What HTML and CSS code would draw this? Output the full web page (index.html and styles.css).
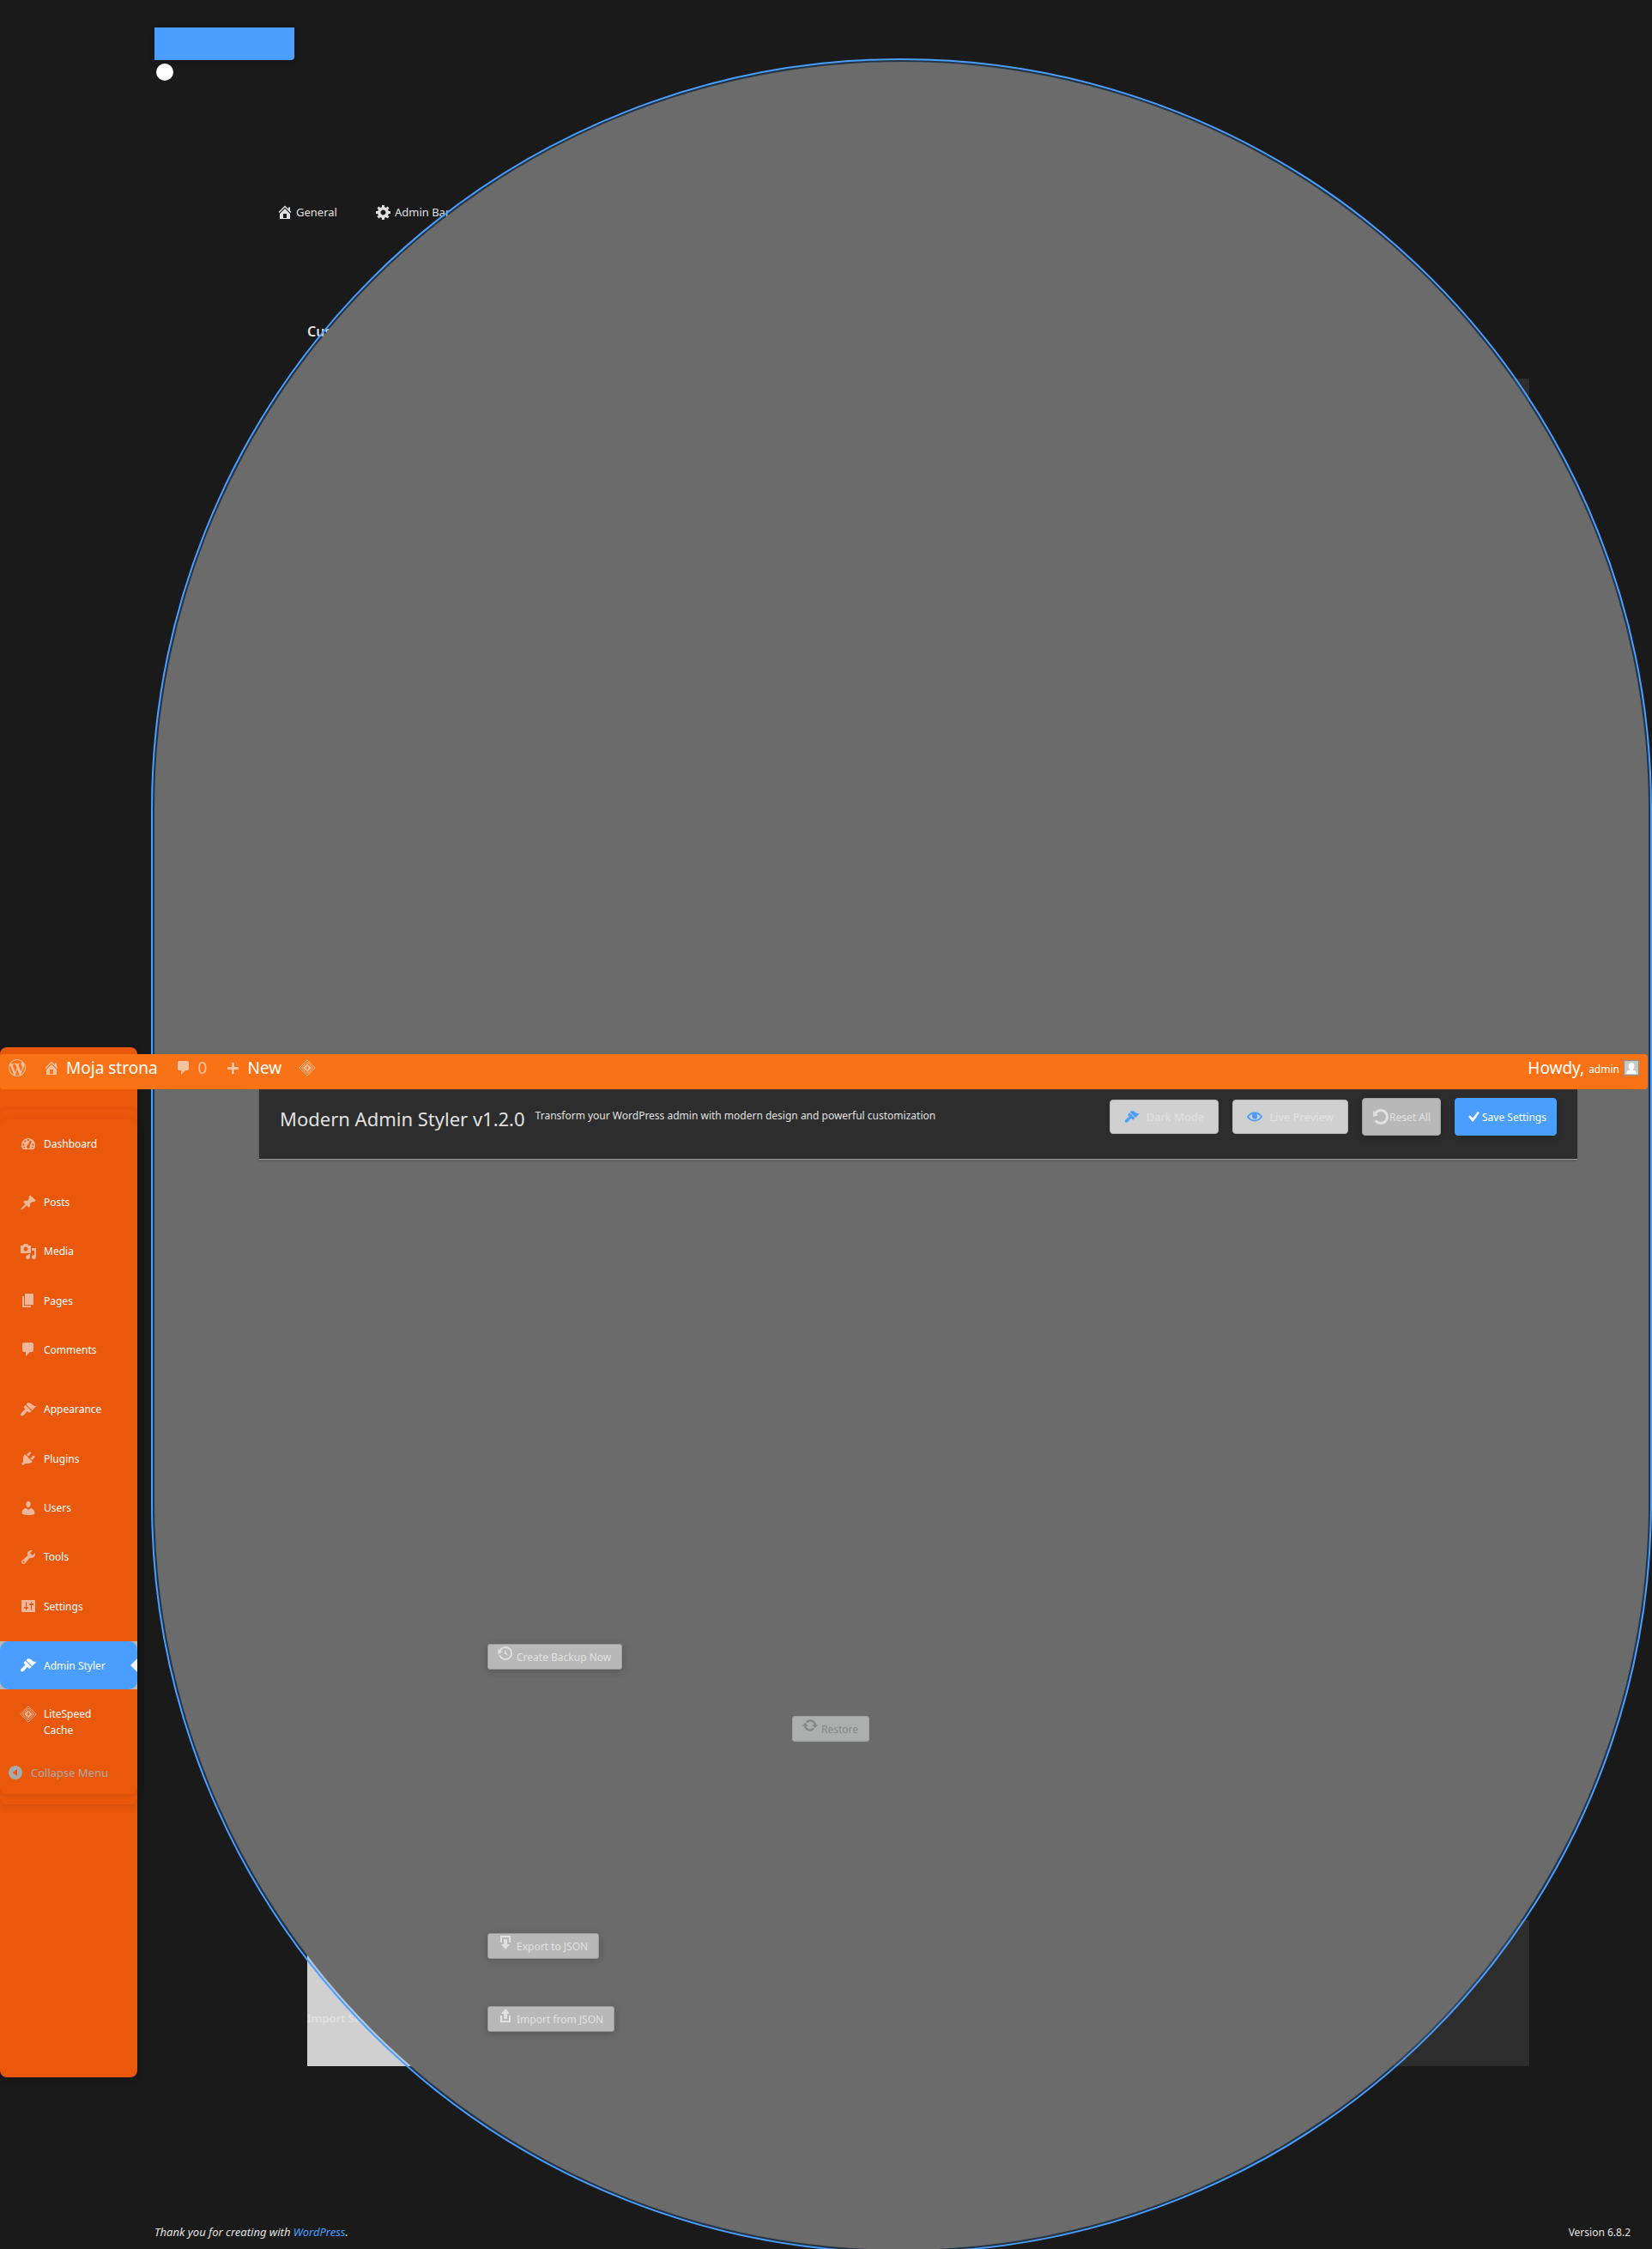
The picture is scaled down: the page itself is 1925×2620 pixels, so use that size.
FILE: index.html
```html
<!DOCTYPE html>
<html lang="en">
<head>
<meta charset="utf-8">
<title>Modern Admin Styler</title>
<link rel="stylesheet" href="styles.css">
</head>
<body>
<svg class="sprite" aria-hidden="true">
  <symbol id="i-wp" viewBox="0 0 20 20"><path d="M20 10c0-5.51-4.49-10-10-10C4.48 0 0 4.49 0 10c0 5.52 4.48 10 10 10 5.51 0 10-4.48 10-10zM7.78 15.37L4.37 6.22c.55-.02 1.17-.08 1.17-.08.5-.06.44-1.13-.06-1.11 0 0-1.45.11-2.37.11-.18 0-.37 0-.58-.01C4.12 2.69 6.87 1.11 10 1.11c2.33 0 4.45.87 6.05 2.34-.68-.11-1.65.39-1.65 1.58 0 .74.45 1.36.9 2.1.35.61.55 1.36.55 2.46 0 1.49-1.4 5-1.4 5l-3.03-8.37c.54-.02.82-.17.82-.17.5-.05.44-1.25-.06-1.22 0 0-1.44.12-2.38.12-.87 0-2.33-.12-2.33-.12-.5-.03-.56 1.2-.06 1.22l.92.08 1.26 3.41zM17.41 10c.24-.64.74-1.87.43-4.25.7 1.29 1.05 2.71 1.05 4.25 0 3.29-1.73 6.24-4.4 7.78.97-2.59 1.94-5.2 2.92-7.78zM6.1 18.09C3.12 16.65 1.11 13.53 1.11 10c0-1.3.23-2.48.72-3.59C3.25 10.3 4.67 14.2 6.1 18.09zm4.03-6.63l2.58 6.98c-.86.29-1.76.45-2.71.45-.79 0-1.57-.11-2.29-.33.81-2.38 1.62-4.74 2.42-7.1z"/></symbol>
  <symbol id="i-home" viewBox="0 0 20 20"><path d="M16 8.5l1.53 1.53-1.06 1.06L10 4.6l-6.47 6.49-1.06-1.06L10 2.5l4 4v-2h2v4zm-6-2.46l6 5.99V18H4v-5.97zM12 17v-5H8v5h4z"/></symbol>
  <symbol id="i-gear" viewBox="0 0 20 20"><path d="M18 12h-2.18c-.17.7-.44 1.35-.81 1.93l1.54 1.54-2.1 2.1-1.54-1.54c-.58.36-1.23.63-1.91.79V19H8v-2.18c-.68-.16-1.33-.43-1.91-.79l-1.54 1.54-2.12-2.12 1.54-1.54c-.36-.58-.63-1.23-.79-1.91H1V9.03h2.17c.16-.7.44-1.35.8-1.94L2.43 5.55l2.1-2.1 1.54 1.54c.58-.37 1.24-.64 1.93-.81V2h3v2.18c.68.16 1.33.43 1.91.79l1.54-1.54 2.12 2.12-1.54 1.54c.36.59.64 1.24.8 1.94H18V12zm-8.5 1.5c1.66 0 3-1.34 3-3s-1.34-3-3-3-3 1.34-3 3 1.34 3 3 3z"/></symbol>
  <symbol id="i-comment" viewBox="0 0 20 20"><path d="M5 2h9c1.1 0 2 .9 2 2v7c0 1.1-.9 2-2 2h-2l-5 5v-5H5c-1.1 0-2-.9-2-2V4c0-1.1.9-2 2-2z"/></symbol>
  <symbol id="i-plus" viewBox="0 0 20 20"><path d="M17 9v3h-5v5H9v-5H4V9h5V4h3v5h5z"/></symbol>
  <symbol id="i-litespeed" viewBox="0 0 20 20"><path fill="none" stroke="currentColor" stroke-width="1" d="M10 .8L19.200 10 10 19.200.8 10z"/><path fill="none" stroke="currentColor" stroke-width="1" d="M10 3.300L16.700 10 10 16.700 3.300 10z"/><path fill-rule="evenodd" d="M10 5.200L14.800 10 10 14.800 5.200 10zM11.200 6.700L8 10.400h1.700L8.800 13.300 12 9.600h-1.700z"/></symbol>
  <symbol id="i-dashboard" viewBox="0 0 20 20"><path fill-rule="evenodd" d="M3.760 17h12.480C17.340 15.630 18 13.900 18 12c0-4.420-3.580-8-8-8s-8 3.580-8 8c0 1.900.66 3.630 1.760 5zM9 5h2v2H9zM5.500 6.500h2v2h-2zM3.500 10.500h2v2h-2zM14.500 10.500h2v2h-2zM12.300 6.600l1.600.9-2.400 5.700c.5.900.2 2-.7 2.500-.9.400-2 .1-2.500-.8-.4-.9-.1-1.900.7-2.400zM4.500 14h1.500v1.300H4.500zM14 14h1.500v1.300H14z"/></symbol>
  <symbol id="i-post" viewBox="0 0 20 20"><path d="M10.440 3.020l1.820-1.820 6.360 6.350-1.830 1.820c-1.050-.68-2.480-.57-3.410.36l-.75.75c-.92.93-1.040 2.350-.35 3.410l-1.830 1.820-2.410-2.410-2.800 2.790c-.42.42-3.380 2.710-3.800 2.290s1.860-3.390 2.280-3.810l2.790-2.790L4.100 9.360l1.830-1.820c1.050.69 2.480.57 3.400-.36l.75-.75c.93-.92 1.050-2.350.36-3.410z"/></symbol>
  <symbol id="i-media" viewBox="0 0 20 20"><path d="M13 11V4c0-.55-.45-1-1-1h-1.670L9 1H5L3.670 3H2c-.55 0-1 .45-1 1v7c0 .55.45 1 1 1h10c.55 0 1-.45 1-1zM7 4.500c1.380 0 2.500 1.120 2.500 2.500S8.380 9.500 7 9.500 4.500 8.380 4.500 7 5.620 4.500 7 4.500zM14 6h5v10.500c0 1.380-1.120 2.500-2.500 2.500S14 17.880 14 16.500s1.120-2.500 2.500-2.500c.17 0 .34.02.5.05V9h-3V6zm-4 8.050V13h2v3.500c0 1.380-1.120 2.500-2.500 2.500S7 17.880 7 16.500 8.120 14 9.500 14c.17 0 .34.02.5.05z"/></symbol>
  <symbol id="i-page" viewBox="0 0 20 20"><path d="M6 15V2h10v13H6zm-1 1h8v2H3V5h2v11z"/></symbol>
  <symbol id="i-brush" viewBox="0 0 20 20"><path d="M14.480 11.060L7.410 3.990l1.500-1.500c.5-.56 2.300-.47 3.510.32 1.210.8 1.430 1.280 2.910 2.100 1.180.64 2.450 1.260 4.450.85zm-.71.71L6.700 4.700 4.930 6.470c-.39.39-.39 1.020 0 1.410l1.060 1.060c.39.39.39 1.030 0 1.420-.6.6-1.430 1.110-2.210 1.690-.35.26-.7.53-1.010.84C1.430 14.230.4 16.080 1.400 17.070c.99 1 2.840-.03 4.180-1.360.31-.31.58-.66.85-1.020.57-.78 1.080-1.610 1.690-2.210.39-.39 1.020-.39 1.410 0l1.060 1.060c.39.39 1.020.39 1.410 0z"/></symbol>
  <symbol id="i-plugin" viewBox="0 0 20 20"><path d="M13.110 4.360L9.870 7.600 8 5.730l3.240-3.240c.35-.34 1.050-.2 1.560.32.52.51.66 1.210.31 1.550zm-8 1.770l.91-1.120 9.010 9.010-1.190.84c-.71.71-2.630 1.160-3.820 1.160H6.140L4.900 17.260c-.59.59-1.540.59-2.120 0-.59-.58-.59-1.530 0-2.120l1.240-1.240v-3.880c0-1.130.4-3.190 1.090-3.890zm7.260 3.970l3.240-3.240c.34-.35 1.040-.21 1.550.31.52.51.66 1.210.31 1.550l-3.240 3.250z"/></symbol>
  <symbol id="i-user" viewBox="0 0 20 20"><path d="M10 9.250c-2.270 0-2.730-3.440-2.730-3.440C7 4.020 7.820 2 9.970 2c2.160 0 2.980 2.020 2.710 3.810 0 0-.41 3.440-2.680 3.440zm0 2.570L12.720 10c2.390 0 4.520 2.330 4.520 4.530v2.490s-3.650 1.130-7.240 1.130c-3.650 0-7.240-1.130-7.240-1.130v-2.490c0-2.250 1.940-4.480 4.470-4.480z"/></symbol>
  <symbol id="i-tools" viewBox="0 0 20 20"><path d="M16.680 9.770c-1.340 1.340-3.300 1.670-4.950.99l-5.410 6.520c-.99.99-2.590.99-3.580 0s-.99-2.590 0-3.570l6.520-5.420c-.68-1.650-.35-3.610.99-4.950 1.280-1.280 3.120-1.620 4.720-1.060l-2.890 2.890 2.820 2.820 2.860-2.870c.53 1.580.18 3.390-1.080 4.650zM3.810 16.210c.4.390 1.040.390 1.430 0 .4-.4.4-1.040 0-1.430-.39-.4-1.030-.4-1.430 0-.39.39-.39 1.030 0 1.430z"/></symbol>
  <symbol id="i-settings" viewBox="0 0 20 20"><path d="M18 16V4c0-.55-.45-1-1-1H3c-.55 0-1 .45-1 1v12c0 .55.45 1 1 1h14c.55 0 1-.45 1-1zM8 11h1c.55 0 1 .45 1 1s-.45 1-1 1H8v1.500c0 .28-.22.5-.5.5s-.5-.22-.5-.5V13H6c-.55 0-1-.45-1-1s.45-1 1-1h1V5.500c0-.28.22-.5.5-.5s.5.22.5.5V11zm5-2h-1c-.55 0-1-.45-1-1s.45-1 1-1h1V5.500c0-.28.22-.5.5-.5s.5.22.5.5V7h1c.55 0 1 .45 1 1s-.45 1-1 1h-1v5.500c0 .28-.22.5-.5.5s-.5-.22-.5-.5V9z"/></symbol>
  <symbol id="i-collapse" viewBox="0 0 20 20"><path fill-rule="evenodd" d="M10 2c4.420 0 8 3.580 8 8s-3.580 8-8 8-8-3.580-8-8 3.580-8 8-8zM12 6v8l-5.500-4z"/></symbol>
  <symbol id="i-eye" viewBox="0 0 20 20"><path d="M19.700 9.400C17.700 6 14 3.900 10 3.900S2.300 6 .3 9.400L0 10l.3.6c2 3.400 5.700 5.500 9.700 5.500s7.700-2.100 9.700-5.500l.3-.6-.3-.6zM10 14.100c-3.100 0-6-1.600-7.700-4.100C3.600 8 5.700 6.600 8 6.100c-.9.600-1.500 1.700-1.500 2.900 0 1.900 1.600 3.500 3.500 3.500s3.500-1.600 3.500-3.500c0-1.200-.6-2.300-1.500-2.900 2.300.5 4.400 1.900 5.700 3.900-1.700 2.500-4.600 4.100-7.700 4.100z"/><path d="M10 6.200a3.400 3.400 0 1 1-3.300 4.200C8 10.400 9.800 9 10 6.200z"/></symbol>
  <symbol id="i-rotate" viewBox="0 0 20 20"><path d="M10.250 1.020c5.100 0 8.750 4.040 8.750 9s-3.650 9-8.750 9c-3.200 0-6.020-1.590-7.680-3.990l2.590-1.520c1.100 1.500 2.860 2.510 4.840 2.510 3.300 0 6-2.790 6-6s-2.700-6-6-6c-1.970 0-3.720 1-4.820 2.490L7 8.020l-6 2v-7L2.890 4.600c1.690-2.170 4.360-3.580 7.360-3.580z"/></symbol>
  <symbol id="i-yes" viewBox="0 0 20 20"><path d="M14.830 3.890l2 1.340-6.810 9.980H8.300L4.200 9.900l1.740-1.650 3.100 3.250z"/></symbol>
  <symbol id="i-backup" viewBox="0 0 20 20"><path d="M13.650 2.880c3.930 2.010 5.480 6.840 3.470 10.770s-6.830 5.480-10.770 3.470c-1.870-.96-3.200-2.560-3.860-4.400l1.640-1.030c.45 1.570 1.520 2.950 3.080 3.760 3.010 1.540 6.690.35 8.230-2.660 1.550-3.010.36-6.690-2.650-8.240C9.780 3.010 6.100 4.200 4.560 7.210l1.880.97-4.950 3.080-.39-5.820 1.780.91C4.900 2.400 9.750.89 13.650 2.880zm-4.360 7.830C9.110 10.530 9 10.280 9 10c0-.07.03-.12.04-.19h-.01L10 5l.97 4.810L14 13l-4.500-2.120.02-.02c-.08-.04-.16-.09-.23-.15z"/></symbol>
  <symbol id="i-update" viewBox="0 0 20 20"><path d="M10.200 3.280c3.530 0 6.430 2.610 6.920 6h2.080l-3.500 4-3.500-4h2.320c-.45-1.970-2.210-3.450-4.320-3.450-1.450 0-2.730.71-3.540 1.780L4.950 5.660C6.230 4.200 8.110 3.280 10.200 3.280zm-.4 13.440c-3.520 0-6.430-2.610-6.920-6H.8l3.500-4c1.170 1.330 2.330 2.670 3.500 4H5.480c.45 1.970 2.210 3.450 4.320 3.450 1.450 0 2.730-.71 3.540-1.780l1.710 1.950c-1.280 1.460-3.150 2.380-5.250 2.380z"/></symbol>
  <symbol id="i-download" viewBox="0 0 20 20"><path d="M14.010 4v6h2V2H4v8h2.010V4h8zm-2 2v6h3l-5 6-5-6h3V6h4z"/></symbol>
  <symbol id="i-upload" viewBox="0 0 20 20"><path d="M8 14V8H5l5-6 5 6h-3v6H8zm-2 2v-6H4v8h12.010v-8H14v6H6z"/></symbol>
</svg>

<div class="page">
  <nav class="sidebar" aria-label="Main menu">
    <div class="menu-wrap">
      <div class="menu">
        <div class="group"><a class="item" href="#"><svg class="icon"><use href="#i-dashboard"/></svg><span>Dashboard</span></a></div>
        <div class="group group-content">
          <a class="item" href="#"><svg class="icon"><use href="#i-post"/></svg><span>Posts</span></a>
          <a class="item" href="#"><svg class="icon"><use href="#i-media"/></svg><span>Media</span></a>
          <a class="item" href="#"><svg class="icon"><use href="#i-page"/></svg><span>Pages</span></a>
          <a class="item" href="#"><svg class="icon"><use href="#i-comment"/></svg><span>Comments</span></a>
        </div>
        <div class="group group-site">
          <a class="item" href="#"><svg class="icon"><use href="#i-brush"/></svg><span>Appearance</span></a>
          <a class="item" href="#"><svg class="icon"><use href="#i-plugin"/></svg><span>Plugins</span></a>
          <a class="item" href="#"><svg class="icon"><use href="#i-user"/></svg><span>Users</span></a>
          <a class="item" href="#"><svg class="icon"><use href="#i-tools"/></svg><span>Tools</span></a>
          <a class="item" href="#"><svg class="icon"><use href="#i-settings"/></svg><span>Settings</span></a>
        </div>
        <div class="group">
          <div class="current"><a class="item" href="#" aria-current="page"><svg class="icon"><use href="#i-brush"/></svg><span>Admin Styler</span></a></div>
          <a class="item item-tall" href="#"><svg class="icon"><use href="#i-litespeed"/></svg><span>LiteSpeed Cache</span></a>
        </div>
        <button class="collapse" type="button"><svg class="icon"><use href="#i-collapse"/></svg>Collapse Menu</button>
      </div>
    </div>
  </nav>

  <main class="main">
    <div class="track"></div>
    <div class="knob"></div>
    <div class="panel">
      <nav class="tabs" aria-label="Sections">
        <a class="tab" href="#"><svg class="icon"><use href="#i-home"/></svg>General</a>
        <a class="tab" href="#"><svg class="icon"><use href="#i-gear"/></svg>Admin Bar</a>
      </nav>
      <div class="content">
        <h2 class="heading">Custom CSS</h2>
        <div class="card"></div>
        <div class="row"><button class="button" type="button"><svg class="icon"><use href="#i-backup"/></svg>Create Backup Now</button></div>
        <div class="row row-restore"><button class="button" type="button" disabled><svg class="icon"><use href="#i-update"/></svg>Restore</button></div>
        <table class="table">
          <tr><th scope="row"></th><td><button class="button" type="button"><svg class="icon"><use href="#i-download"/></svg>Export to JSON</button></td></tr>
          <tr><th scope="row">Import Settings</th><td><button class="button" type="button"><svg class="icon"><use href="#i-upload"/></svg>Import from JSON</button></td></tr>
        </table>
      </div>
    </div>
    <footer class="footer">
      <em>Thank you for creating with <a href="#">WordPress</a>.</em>
      <span class="version">Version 6.8.2</span>
    </footer>
    <div class="pill"></div>
  </main>
</div>

<div class="floating">
  <div class="adminbar">
    <a class="bar-item" href="#" aria-label="About WordPress"><svg class="icon"><use href="#i-wp"/></svg></a>
    <a class="bar-item" href="#"><svg class="icon"><use href="#i-home"/></svg>Moja strona</a>
    <a class="bar-item bar-count" href="#"><svg class="icon"><use href="#i-comment"/></svg><span>0</span></a>
    <a class="bar-item" href="#"><svg class="icon"><use href="#i-plus"/></svg>New</a>
    <a class="bar-item" href="#" aria-label="LiteSpeed"><svg class="icon"><use href="#i-litespeed"/></svg></a>
    <a class="bar-item account" href="#">Howdy, <span class="name">admin</span>
      <svg class="avatar" viewBox="0 0 18 18"><path fill="#c8c8c8" d="M0 0h18v18H0z"/><path fill="#fff" d="M9 3c2.400 0 3.700 1.700 3.500 4-.1 1.500-.7 2.700-1.500 3.400v1.100c2 .6 3.700 1.300 4 4.500H3c.3-3.200 2-3.900 4-4.500v-1.100C6.200 9.700 5.600 8.500 5.500 7 5.300 4.700 6.600 3 9 3z"/><path fill="none" stroke="#8c8f94" d="M.5.5h17v17H.5z"/></svg></a>
  </div>
  <header class="header">
    <h1 class="title">Modern Admin Styler v1.2.0</h1>
    <p class="subtitle">Transform your WordPress admin with modern design and powerful customization</p>
    <div class="actions">
      <button class="toggle" type="button"><svg class="icon"><use href="#i-brush"/></svg>Dark Mode</button>
      <button class="toggle" type="button"><svg class="icon"><use href="#i-eye"/></svg>Live Preview</button>
      <button class="action reset" type="button"><svg class="icon"><use href="#i-rotate"/></svg>Reset All</button>
      <button class="action save" type="button"><svg class="icon"><use href="#i-yes"/></svg>Save Settings</button>
    </div>
  </header>
</div>
</body>
</html>
```
FILE: styles.css
```css
* { box-sizing: border-box; }

body {
  position: relative;
  margin: 0;
  background: #1a1a1a;
  color: #e0e0e0;
  font: 12px/19px "Noto Sans", sans-serif;
}

a { color: inherit; text-decoration: none; }
button { font: inherit; cursor: pointer; }
.sprite { display: block; width: 0; height: 0; }
.icon { flex: none; width: 20px; height: 20px; fill: currentColor; }

.page {
  display: grid;
  grid-template-columns: 160px minmax(0, 1fr);
  align-items: start;
}

/* Side menu */
.sidebar {
  min-height: 1200px;
  margin-top: 1220px;
  padding-top: 72px;
  border-radius: 8px;
  background: #ea580c;
  box-shadow: 0 2px 8px rgba(0, 0, 0, .15);
  color: #fff;
}
.menu-wrap {
  padding: 12px 0;
  border-radius: 8px;
  box-shadow: 0 2px 8px rgba(0, 0, 0, .1);
}
.menu {
  display: flex;
  flex-direction: column;
  gap: 12px;
  border-radius: 8px;
  box-shadow: 0 2px 8px rgba(0, 0, 0, .1);
}
.group { display: flex; flex-direction: column; }
.group-content { min-height: 229px; }
.group-site { min-height: 287px; }
.item {
  display: flex;
  flex: 1;
  align-items: center;
  gap: 8px;
  min-height: 56px;
  padding: 0 40px 0 23px;
}
.item span { white-space: nowrap; }
.item .icon { color: rgba(240, 246, 252, .6); }
.item-tall { align-items: flex-start; padding-top: 19px; min-height: 72px; }
.item-tall span { white-space: normal; }
.current { position: relative; background: #b8b8b8; }
.current .item { border-radius: 10px; background: #4a9eff; }
.current .item .icon { color: #fff; }
.current::after {
  content: "";
  position: absolute;
  top: 20px;
  right: 0;
  border: 8px solid transparent;
  border-left-width: 0;
  border-right-color: #f0f0f1;
}
.collapse {
  display: flex;
  align-items: center;
  gap: 8px;
  height: 38px;
  padding: 0 8px 12px;
  border: 0;
  background: none;
  color: #a7aaad;
  font-size: 13px;
}

/* Content column */
.main {
  position: relative;
  padding: 32px 25px 11px 20px;
}
.track {
  width: 163px;
  height: 38px;
  border-radius: 0 0 4px 0;
  background: #4a9eff;
  box-shadow: 0 2px 6px rgba(0, 0, 0, .2);
}
.knob {
  width: 20px;
  height: 20px;
  margin: 4px 2px;
  border-radius: 50%;
  background: #fff;
}
.pill {
  position: absolute;
  z-index: 1;
  top: 72px;
  right: 4px;
  bottom: 0;
  left: 20px;
  border-radius: 9999px;
  background: #6b6b6b;
  box-shadow: 0 0 0 3px rgba(74, 158, 255, .2);
  outline: 2px solid #4a9eff;
  outline-offset: 2px;
}
.panel { margin: 0 62px 0 122px; padding: 139px 0 184px; }
.tabs { display: flex; gap: 44px; padding: 0 20px; }
.tab { display: flex; align-items: center; gap: 3px; height: 20px; font-size: 13px; }
.content { padding: 0 56px; }
.heading {
  margin: 118px 0 44px;
  font-size: 16px;
  line-height: 22px;
  font-weight: 600;
}
.card { height: 1459px; background: #2d2d2d; }
.row { height: 84px; padding: 15px 210px; }
.row-restore { padding-left: 565px; }
.table {
  width: 100%;
  margin-top: 169px;
  border-collapse: collapse;
  background: #2d2d2d;
}
.table tr { height: 85px; }
.table th {
  width: 200px;
  padding: 20px 0;
  background: #d0d0d0;
  font-size: 13px;
  font-weight: 600;
  text-align: left;
  vertical-align: top;
}
.table td { padding: 15px 10px; vertical-align: top; }
.button {
  position: relative;
  z-index: 2;
  display: flex;
  align-items: center;
  gap: 3px;
  height: 30px;
  padding: 0 12px 0 10px;
  border: 1px solid #9a9a9a;
  border-radius: 3px;
  background: #b8b8b8;
  box-shadow: 0 2px 8px rgba(0, 0, 0, .2);
  color: #e0e0e0;
}
.button .icon { align-self: flex-start; }
.button:disabled {
  border-color: #a0a2a2;
  background: #adafaf;
  box-shadow: none;
  color: #868889;
  cursor: default;
}
.footer { display: flex; justify-content: space-between; font-size: 13px; }
.footer a { color: #4a9eff; }
.version { font-size: 12px; }

.floating {
  position: absolute;
  z-index: 3;
  top: 1228px;
  right: 5px;
  left: 0;
}
.adminbar {
  display: flex;
  gap: 20px;
  height: 41px;
  padding: 6px 10px 0;
  border-radius: 4px;
  background: #f97316;
  color: #fff;
  font-size: 19px;
  line-height: 20px;
}
.bar-item { display: flex; gap: 7px; height: 20px; }
.bar-item .icon { color: rgba(240, 246, 252, .6); }
.bar-count { color: rgba(240, 246, 252, .6); }
.account { gap: 5px; margin-left: auto; }
.name { font-size: 12px; line-height: 24px; }
.avatar { width: 18px; height: 18px; margin-top: 1px; }
.header {
  display: flex;
  align-items: center;
  gap: 12px;
  height: 82px;
  margin: 0 82px 0 302px;
  padding: 0 24px 17px;
  border-bottom: 1px solid #9a9a9a;
  background: #2d2d2d;
  box-shadow: 0 1px 3px rgba(0, 0, 0, .2);
}
.title { margin: 0; padding-top: 3px; font-size: 22px; line-height: 30px; font-weight: 400; }
.subtitle { margin: 0; padding-bottom: 4px; }
.actions { display: flex; align-items: center; gap: 16px; margin-left: auto; }
.toggle, .action {
  display: flex;
  align-items: center;
  border: 1px solid #b8b8b8;
  border-radius: 4px;
}
.toggle {
  gap: 8px;
  height: 40px;
  padding: 0 16px;
  background: #d0d0d0;
  color: #e0e0e0;
  font-size: 13px;
}
.toggle .icon { width: 18px; height: 18px; color: #4a9eff; }
.action { height: 44px; padding: 0 11px; box-shadow: 0 2px 8px rgba(0, 0, 0, .2); }
.reset { border-color: #a0a0a0; background: #b8b8b8; color: #e0e0e0; }
.save { border-color: #4a9eff; background: #4a9eff; color: #fff; }
```
